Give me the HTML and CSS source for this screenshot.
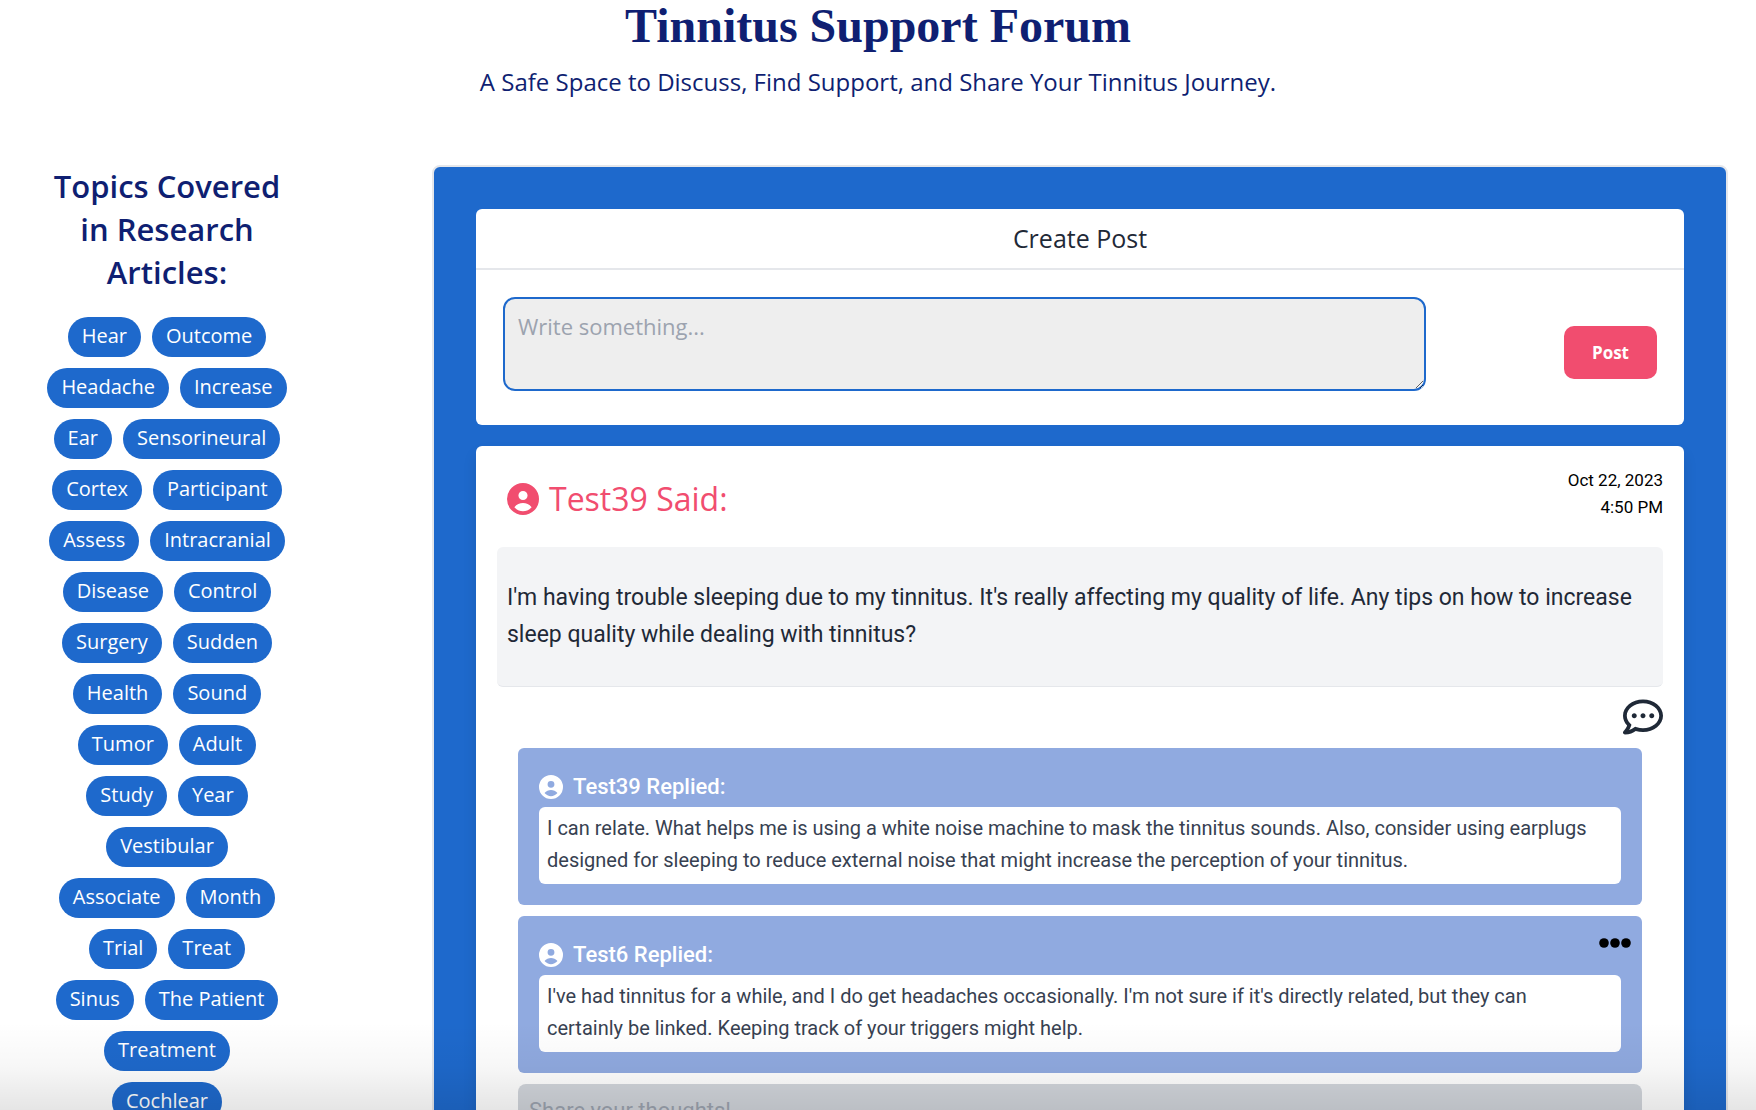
FILE: index.html
```html
<!DOCTYPE html>
<html lang="en">
<head>
<meta charset="utf-8">
<meta name="viewport" content="width=device-width, initial-scale=1">
<title>Tinnitus Support Forum</title>
<link rel="stylesheet" href="styles.css">
</head>
<body>
<svg class="sprite" aria-hidden="true">
  <symbol id="user" viewBox="2 2 20 20">
    <path fill-rule="evenodd" d="M12 2a10 10 0 1 0 0 20 10 10 0 0 0 0-20zM12 6.95a2.85 2.85 0 1 0 0 5.7 2.85 2.85 0 0 0 0-5.7zM6.6 17.1C8 15.4 10 14.5 12 14.5s4 .9 5.4 2.6C16 18.8 14 19.7 12 19.7S8 18.8 6.6 17.1z"/>
  </symbol>
</svg>
<div class="page">
  <header class="masthead">
    <h1 class="masthead-title">Tinnitus Support Forum</h1>
    <p class="masthead-tagline">A Safe Space to Discuss, Find Support, and Share Your Tinnitus Journey.</p>
  </header>

  <div class="layout">
    <aside class="topics">
      <h2 class="topics-title">Topics Covered in Research Articles:</h2>
      <div class="topics-list">
        <button class="topic" type="button">Hear</button>
        <button class="topic" type="button">Outcome</button>
        <button class="topic" type="button">Headache</button>
        <button class="topic" type="button">Increase</button>
        <button class="topic" type="button">Ear</button>
        <button class="topic" type="button">Sensorineural</button>
        <button class="topic" type="button">Cortex</button>
        <button class="topic" type="button">Participant</button>
        <button class="topic" type="button">Assess</button>
        <button class="topic" type="button">Intracranial</button>
        <button class="topic" type="button">Disease</button>
        <button class="topic" type="button">Control</button>
        <button class="topic" type="button">Surgery</button>
        <button class="topic" type="button">Sudden</button>
        <button class="topic" type="button">Health</button>
        <button class="topic" type="button">Sound</button>
        <button class="topic" type="button">Tumor</button>
        <button class="topic" type="button">Adult</button>
        <button class="topic" type="button">Study</button>
        <button class="topic" type="button">Year</button>
        <button class="topic" type="button">Vestibular</button>
        <button class="topic" type="button">Associate</button>
        <button class="topic" type="button">Month</button>
        <button class="topic" type="button">Trial</button>
        <button class="topic" type="button">Treat</button>
        <button class="topic" type="button">Sinus</button>
        <button class="topic" type="button">The Patient</button>
        <button class="topic" type="button">Treatment</button>
        <button class="topic" type="button">Cochlear</button>
      </div>
    </aside>

    <main class="feed">
      <section class="composer">
        <h2 class="composer-title"><label for="new-post">Create Post</label></h2>
        <form class="composer-form">
          <textarea class="composer-input" id="new-post" placeholder="Write something..."></textarea>
          <button class="composer-submit" type="button">Post</button>
        </form>
      </section>

      <article class="post">
        <header class="post-header">
          <h3 class="post-author"><svg class="post-avatar" aria-hidden="true"><use href="#user"/></svg>Test39 Said:</h3>
          <time class="post-date" datetime="2023-10-22T16:50">Oct 22, 2023<br>4:50 PM</time>
        </header>
        <p class="post-body">I'm having trouble sleeping due to my tinnitus. It's really affecting my quality of life. Any tips on how to increase sleep quality while dealing with tinnitus?</p>
        <div class="post-actions">
          <button class="icon-button" type="button" aria-label="Comment">
            <svg class="comment-icon" viewBox="0 0 512 512" aria-hidden="true"><path d="M144 208c-17.7 0-32 14.3-32 32s14.3 32 32 32 32-14.3 32-32-14.3-32-32-32zm112 0c-17.7 0-32 14.3-32 32s14.3 32 32 32 32-14.3 32-32-14.3-32-32-32zm112 0c-17.7 0-32 14.3-32 32s14.3 32 32 32 32-14.3 32-32-14.3-32-32-32zM256 32C114.6 32 0 125.1 0 240c0 47.6 19.9 91.2 52.9 126.3C38 405.7 7 439.1 6.5 439.5c-6.6 7-8.4 17.2-4.6 26S14.4 480 24 480c61.5 0 110-25.7 139.1-46.3C192 442.8 223.2 448 256 448c141.4 0 256-93.1 256-208S397.4 32 256 32zm0 368c-26.7 0-53.1-4.1-78.4-12.1l-22.7-7.2-19.5 13.8c-14.3 10.1-33.9 21.4-57.5 29 7.3-12.1 14.4-25.7 19.9-40.2l10.6-28.1-20.6-21.8C69.7 314.1 48 282.2 48 240c0-88.2 93.3-160 208-160s208 71.8 208 160-93.3 160-208 160z"/></svg>
          </button>
        </div>
        <div class="replies">
          <section class="reply">
            <h4 class="reply-author"><svg class="reply-avatar" aria-hidden="true"><use href="#user"/></svg>Test39 Replied:</h4>
            <p class="reply-body">I can relate. What helps me is using a white noise machine to mask the tinnitus sounds. Also, consider using earplugs designed for sleeping to reduce external noise that might increase the perception of your tinnitus.</p>
          </section>
          <section class="reply">
            <button class="icon-button reply-menu" type="button" aria-label="Reply options">
              <svg class="dots-icon" viewBox="0 0 32 10" aria-hidden="true"><circle cx="5" cy="5" r="4.8"/><circle cx="16" cy="5" r="4.8"/><circle cx="27" cy="5" r="4.8"/></svg>
            </button>
            <h4 class="reply-author"><svg class="reply-avatar" aria-hidden="true"><use href="#user"/></svg>Test6 Replied:</h4>
            <p class="reply-body">I've had tinnitus for a while, and I do get headaches occasionally. I'm not sure if it's directly related, but they can certainly be linked. Keeping track of your triggers might help.</p>
          </section>
          <textarea class="reply-input" aria-label="Reply" placeholder="Share your thoughts!"></textarea>
        </div>
      </article>
    </main>
  </div>
</div>
</body>
</html>
```
FILE: styles.css
```css
:root {
  --blue: #1e69cc;
  --navy: #0f1f72;
  --pink: #f14d6f;
  --ink: #1f2937;
  --heading: "Open Sans", "Noto Sans", sans-serif;
  --text: Roboto, "Liberation Sans", sans-serif;
}

* { box-sizing: border-box; }

body, h1, h2, h3, h4, p { margin: 0; }

body {
  background: #fff;
  color: var(--ink);
  font-family: var(--text);
}

button, textarea { font-family: inherit; }

.sprite { display: none; }

/* The forum fills the window; its lower edge fades into a soft shade. */
.page {
  position: relative;
  height: 100vh;
  overflow: hidden;
}

.page::after {
  content: "";
  position: absolute;
  inset: auto 0 0;
  height: 88px;
  background: linear-gradient(rgba(0, 0, 0, 0), rgba(0, 0, 0, 0.03) 50%, rgba(0, 0, 0, 0.1));
  pointer-events: none;
}

.masthead {
  padding: 2px 0 65px;
  color: var(--navy);
  text-align: center;
}

.masthead-title {
  font: 700 48px/48px "Liberation Serif", serif;
}

.masthead-tagline {
  margin-top: 14px;
  font: 400 24px/36px var(--heading);
}

.layout {
  display: grid;
  grid-template-columns: 334px 1fr;
  gap: 98px;
  padding-right: 28px;
}

.topics { padding: 0 46px; }

.topics-title {
  color: var(--navy);
  font: 600 31px/43px var(--heading);
  text-align: center;
}

.topics-list {
  display: flex;
  flex-wrap: wrap;
  justify-content: center;
  gap: 11px;
  margin-top: 23px;
}

.topic {
  height: 40px;
  padding: 0 14px 2px;
  border: 0;
  border-radius: 20px;
  background: var(--blue);
  color: #fff;
  font: 500 20px/38px var(--heading);
}

.feed {
  padding: 42px;
  border: 2px solid #e5e7eb;
  border-radius: 8px;
  background: var(--blue);
}

.composer {
  border-radius: 6px;
  background: #fff;
}

.composer-title {
  border-bottom: 2px solid #e5e7eb;
  font: 400 25px/59px var(--heading);
  text-align: center;
}

.composer-form {
  display: flex;
  align-items: flex-end;
  justify-content: space-between;
  padding: 27px 27px 34px;
}

.composer-input {
  display: block;
  width: 80%;
  height: 94px;
  padding: 11px 13px;
  border: 2px solid var(--blue);
  border-radius: 12px;
  background: #eee;
  color: var(--ink);
  font: 400 22px/32px var(--heading);
}

.composer-input::placeholder, .reply-input::placeholder { color: #9ca3af; }

.composer-submit {
  margin-bottom: 12px;
  padding: 14px 28px;
  border: 0;
  border-radius: 10px;
  background: var(--pink);
  color: #fff;
  font: 700 17px/25px var(--heading);
}

.post {
  margin-top: 21px;
  padding: 21px 21px 40px;
  border-radius: 6px;
  background: #fff;
  box-shadow: 0 8px 14px rgba(0, 0, 0, 0.1);
}

.post-header {
  display: flex;
  align-items: flex-start;
  justify-content: space-between;
  height: 80px;
}

.post-author {
  display: flex;
  align-items: center;
  gap: 10px;
  padding: 9px 10px;
  color: var(--pink);
  font: 400 32px/46px var(--heading);
}

.post-avatar {
  width: 32px;
  height: 32px;
  fill: currentColor;
}

.post-date {
  color: #000;
  font-size: 17px;
  line-height: 27px;
  text-align: right;
}

.post-body {
  padding: 32px 10px 33px;
  border-bottom: 1px solid #e5e7eb;
  border-radius: 6px;
  background: #f3f4f6;
  font-size: 23px;
  line-height: 37px;
}

.post-actions {
  display: flex;
  justify-content: flex-end;
  padding: 10px 0 11px;
}

.icon-button {
  display: block;
  padding: 0;
  border: 0;
  background: none;
}

.comment-icon {
  display: block;
  width: 40px;
  height: 40px;
  fill: var(--ink);
}

.replies {
  display: flex;
  flex-direction: column;
  gap: 11px;
  padding: 0 21px;
}

.reply {
  position: relative;
  padding: 21px;
  border-radius: 6px;
  background: #90aae0;
}

.reply-author {
  display: flex;
  align-items: center;
  gap: 10px;
  padding-bottom: 2px;
  color: #fff;
  font: 500 22px/36px var(--text);
}

.reply-avatar {
  width: 24px;
  height: 24px;
  fill: currentColor;
}

.reply-menu {
  position: absolute;
  top: 22px;
  right: 11px;
}

.dots-icon {
  display: block;
  width: 32px;
  height: 10px;
}

.reply-body {
  padding: 5px 21px 8px 8px;
  border-radius: 6px;
  background: #fff;
  color: #374151;
  font-size: 20px;
  line-height: 32px;
}

.reply-input {
  display: block;
  height: 96px;
  padding: 11px;
  border: 0;
  border-radius: 8px;
  background: #d1d5db;
  color: var(--ink);
  font: 400 22px/32px var(--text);
}
```
